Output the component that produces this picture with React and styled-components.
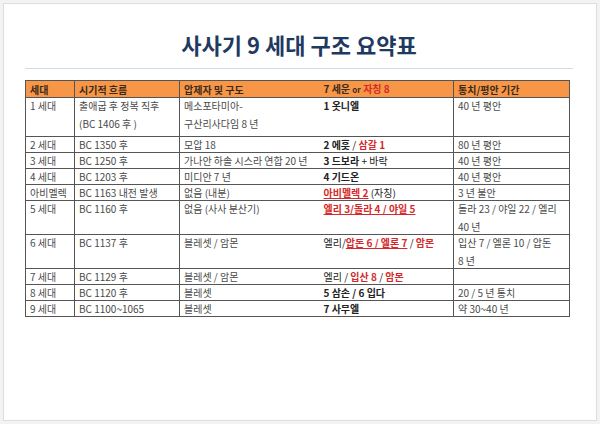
import React from 'react'
import styled, { createGlobalStyle } from 'styled-components'

const Global = createGlobalStyle`
	html, body {
		margin: 0;
		padding: 0;
		background: #f3f3f3;
	}
	body {
		font-family: 'Noto Sans CJK KR', 'Noto Sans', sans-serif;
	}
`

const Slide = styled.div`
	box-sizing: border-box;
	margin: 3px 0 0 3px;
	width: 594px;
	height: 418px;
	background: #fff;
	border: 1px solid #dedede;
	padding: 25px 23px 0 21px;
	display: flex;
	flex-direction: column;
`

const Title = styled.h1`
	margin: 0;
	text-align: center;
	font-size: 22px;
	line-height: 30px;
	font-weight: 700;
	color: #1f3a5f;
	letter-spacing: 0;
`

const Rule = styled.div`
	height: 1px;
	background: #cfdbe5;
	margin: 9px 0 11px;
`

const Table = styled.table`
	border-collapse: collapse;
	width: 544px;
	table-layout: fixed;
	font-size: 10px;
	color: #444;
`

const Row = styled.tr`
	height: ${props => props.h}px;
`

const Head = styled.th`
	background: #f79646;
	color: #3b2a1c;
	font-weight: 700;
	text-align: left;
	padding: 0 4px;
	height: 15px;
	line-height: 15px;
	border: 1px solid #555;
	border-left: ${props => (props.open === 'left' ? 'none' : '1px solid #555')};
	border-right: ${props => (props.open === 'right' ? 'none' : '1px solid #555')};
	white-space: nowrap;
`

const Cell = styled.td`
	vertical-align: top;
	padding: 0 4px;
	line-height: 15px;
	border: 1px solid #555;
	border-left: ${props => (props.open === 'left' ? 'none' : '1px solid #555')};
	border-right: ${props => (props.open === 'right' ? 'none' : '1px solid #555')};
	white-space: nowrap;
	color: ${props => (props.dark ? '#222' : '#4a4a4a')};
`

const Line = styled.div`
	& + & {
		margin-top: 3px;
	}
`

const B = styled.b`
	font-weight: 700;
	color: #222;
`

const Red = styled.b`
	font-weight: 700;
	color: #d42a2a;
	text-decoration: ${props => (props.u ? 'underline' : 'none')};
`

const rows = [
	{
		h: 39,
		gen: '1 세대',
		time: ['출애굽 후 정복 직후', '(BC 1406 후 )'],
		enemy: ['메소포타미아-', '구산리사다임 8 년'],
		judge: <B>1 옷니엘</B>,
		rule: ['40 년 평안']
	},
	{
		h: 15,
		gen: '2 세대',
		time: ['BC 1350 후'],
		enemy: ['모압 18'],
		judge: (
			<>
				<B>2 에훗</B> / <Red>삼갈 1</Red>
			</>
		),
		rule: ['80 년 평안']
	},
	{
		h: 15,
		gen: '3 세대',
		time: ['BC 1250 후'],
		enemy: ['가나안 하솔 시스라 연합 20 년'],
		judge: (
			<>
				<B>3 드보라</B> + 바락
			</>
		),
		rule: ['40 년 평안']
	},
	{
		h: 16,
		gen: '4 세대',
		time: ['BC 1203 후'],
		enemy: ['미디안 7 년'],
		judge: <B>4 기드온</B>,
		rule: ['40 년 평안']
	},
	{
		h: 14,
		gen: '아비멜렉',
		time: ['BC 1163 내전 발생'],
		enemy: ['없음 (내분)'],
		judge: (
			<>
				<Red u>아비멜렉 2</Red> (자칭)
			</>
		),
		rule: ['3 년 불안']
	},
	{
		h: 34,
		gen: '5 세대',
		time: ['BC 1160 후'],
		enemy: ['없음 (사사 분산기)'],
		judge: <Red u>엘리 3/돌라 4 / 야일 5</Red>,
		rule: ['돌라 23 / 야일 22 / 엘리', '40 년']
	},
	{
		h: 32,
		gen: '6 세대',
		time: ['BC 1137 후'],
		enemy: ['블레셋 / 암몬'],
		judge: (
			<>
				엘리/<Red u>압돈 6 / 엘론 7</Red> / <Red>암몬</Red>
			</>
		),
		rule: ['입산 7 / 엘론 10 / 압돈', '8 년']
	},
	{
		h: 16,
		gen: '7 세대',
		time: ['BC 1129 후'],
		enemy: ['블레셋 / 암몬'],
		judge: (
			<>
				엘리 / <Red>입산 8</Red> / <Red>암몬</Red>
			</>
		),
		rule: []
	},
	{
		h: 15,
		gen: '8 세대',
		time: ['BC 1120 후'],
		enemy: ['블레셋'],
		judge: <B>5 삼손 / 6 입다</B>,
		rule: ['20 / 5 년 통치']
	},
	{
		h: 16,
		gen: '9 세대',
		time: ['BC 1100~1065'],
		enemy: ['블레셋'],
		judge: <B>7 사무엘</B>,
		rule: ['약 30~40 년']
	}
]

const lines = list => list.map((t, i) => <Line key={i}>{t}</Line>)

export default function App() {
	return (
		<>
			<Global />
			<Slide>
				<Title>사사기 9 세대 구조 요약표</Title>
				<Rule />
				<Table>
					<colgroup>
						<col style={{ width: 49 }} />
						<col style={{ width: 105 }} />
						<col style={{ width: 140 }} />
						<col style={{ width: 134 }} />
						<col style={{ width: 116 }} />
					</colgroup>
					<thead>
						<Row h={16}>
							<Head>세대</Head>
							<Head>시기적 흐름</Head>
							<Head open='right'>압제자 및 구도</Head>
							<Head open='left'>
								7 세운 <span style={{ fontSize: 8 }}>or</span>{' '}
								<Red as='span'>자칭 8</Red>
							</Head>
							<Head>통치/평안 기간</Head>
						</Row>
					</thead>
					<tbody>
						{rows.map((r, i) => (
							<Row key={i} h={r.h}>
								<Cell>{r.gen}</Cell>
								<Cell>{lines(r.time)}</Cell>
								<Cell open='right'>{lines(r.enemy)}</Cell>
								<Cell open='left' dark>
									{r.judge}
								</Cell>
								<Cell>{lines(r.rule)}</Cell>
							</Row>
						))}
					</tbody>
				</Table>
			</Slide>
		</>
	)
}
